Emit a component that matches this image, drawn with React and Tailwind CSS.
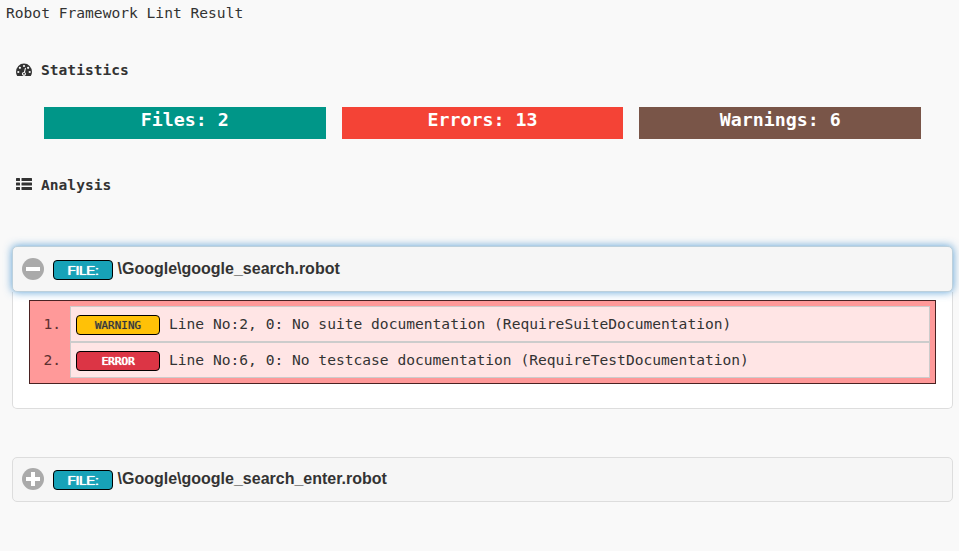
const MONO = "font-['DejaVu_Sans_Mono',monospace]";

function GaugeIcon() {
  return (
    <svg className="block h-[14px] w-4" viewBox="0 0 16 14">
      <path fill="#333" d="M8 .5a8 8.5 0 0 0-8 8.5c0 1.5.4 2.8 1.2 4h13.6c.8-1.2 1.2-2.5 1.2-4A8 8.5 0 0 0 8 .5z" />
      <g fill="#f9f9f9">
        <circle cx="8" cy="3" r="1.1" />
        <circle cx="3.9" cy="4.8" r="1.1" />
        <circle cx="12.1" cy="4.8" r="1.1" />
        <circle cx="2.3" cy="9" r="1.1" />
        <circle cx="13.7" cy="9" r="1.1" />
        <path d="M9 4.8l1 .3-1 4.1a2 2 0 1 1-1.1-.3z" />
      </g>
      <circle cx="8" cy="10.7" r="0.9" fill="#333" />
    </svg>
  );
}

function ListIcon() {
  return (
    <svg className="mb-[2px] block h-[14px] w-4" viewBox="0 0 16 14" fill="#333">
      <rect x="0" y="1" width="4" height="3" rx="0.5" />
      <rect x="5.5" y="1" width="10.5" height="3" rx="0.5" />
      <rect x="0" y="5.5" width="4" height="3" rx="0.5" />
      <rect x="5.5" y="5.5" width="10.5" height="3" rx="0.5" />
      <rect x="0" y="10" width="4" height="3" rx="0.5" />
      <rect x="5.5" y="10" width="10.5" height="3" rx="0.5" />
    </svg>
  );
}

function Toggle({ open }) {
  return (
    <svg className="block size-[22px] shrink-0" viewBox="0 0 22 22">
      <circle cx="11" cy="11" r="11" fill="#aaa" />
      <rect x="4" y="9" width="14" height="4" fill="#fff" />
      {!open && <rect x="9" y="4" width="4" height="14" fill="#fff" />}
    </svg>
  );
}

function Heading({ icon, children }) {
  return (
    <h2 className={`${MONO} flex h-5 items-center gap-[9px] pl-4 text-[14.6px] font-bold leading-5`}>
      {icon}
      <span>{children}</span>
    </h2>
  );
}

function Stat({ color, children }) {
  return (
    <div className={`${MONO} h-8 flex-1 text-center text-[18.27px] font-bold leading-[25px] text-white ${color}`}>
      {children}
    </div>
  );
}

function FileHeader({ open, name }) {
  return (
    <div className="flex items-center pl-[9px]">
      <Toggle open={open} />
      <span className="ml-[9px] mt-[3px] h-5 w-[60px] rounded-[4px] border border-black bg-[#17a2b8] text-center text-[13px] leading-[19px] text-white [text-shadow:0_0_1px_#fff,0.5px_0_0_#fff]">
        FILE:
      </span>
      <span className="ml-[4.5px] text-[16px] font-bold leading-5">{name}</span>
    </div>
  );
}

function Issue({ number, tag, tagClass, children }) {
  return (
    <li className="flex h-9">
      <span className="w-10 shrink-0 pl-[13.5px] leading-9 text-[#5c3030]">{number}.</span>
      <div className="flex flex-1 items-center border border-[#ccc] bg-[#ffe5e5] pl-[5px]">
        <span className={`mt-[2px] h-5 w-[84px] rounded-[4px] border border-black text-center text-[10.96px] leading-[19px] ${tagClass}`}>
          {tag}
        </span>
        <span className="ml-[9px] whitespace-nowrap leading-5">{children}</span>
      </div>
    </li>
  );
}

export default function App() {
  return (
    <div className="h-[551px] w-[959px] overflow-hidden bg-[#f9f9f9] font-['Liberation_Sans',Arial,sans-serif] text-[#333]">
      <h1 className={`${MONO} pl-[6px] pt-[3px] text-[14.6px] leading-5`}>Robot Framework Lint Result</h1>
      <div className="mt-[37px]">
        <Heading icon={<GaugeIcon />}>Statistics</Heading>
      </div>
      <div className="mt-[27px] flex gap-4 pl-11 pr-[38px]">
        <Stat color="bg-[#009688]">Files: 2</Stat>
        <Stat color="bg-[#f44336]">Errors: 13</Stat>
        <Stat color="bg-[#795548]">Warnings: 6</Stat>
      </div>
      <div className="mt-9">
        <Heading icon={<ListIcon />}>Analysis</Heading>
      </div>

      <section className="ml-3 mt-[51px] w-[941px]">
        <div className="relative h-[46px] rounded-[5px] border border-[#bcd0dc] bg-[#f6f6f6] pt-[10px] shadow-[0_0_8px_#3388cccc]">
          <FileHeader open name="\Google\google_search.robot" />
        </div>
        <div className="h-[117px] rounded-b-[5px] border border-t-0 border-[#ddd] bg-white pl-4 pr-4 pt-2">
          <ol className={`${MONO} h-[84px] border border-[#4a2222] bg-[#ff9999] py-[5px] pr-[5px] text-[14.6px]`}>
            <Issue number="1" tag="WARNING" tagClass="bg-[#ffc107] text-[#333] [text-shadow:0_0_1px_#666]">
              Line No:2, 0: No suite documentation (RequireSuiteDocumentation)
            </Issue>
            <Issue number="2" tag="ERROR" tagClass="bg-[#dc3545] text-white [text-shadow:0_0_1px_#fff,0.5px_0_0_#fff]">
              Line No:6, 0: No testcase documentation (RequireTestDocumentation)
            </Issue>
          </ol>
        </div>
      </section>

      <section className="ml-3 mt-12 h-[45px] w-[941px] rounded-[5px] border border-[#ddd] bg-[#f6f6f6] pt-[9px]">
        <FileHeader name="\Google\google_search_enter.robot" />
      </section>
    </div>
  );
}
